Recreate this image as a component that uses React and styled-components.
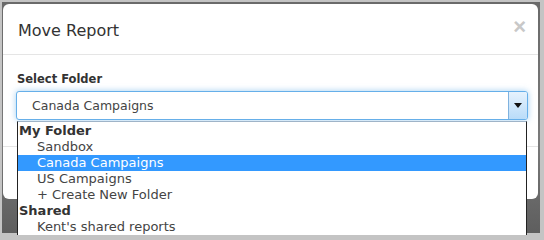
import React from "react";
import styled, { createGlobalStyle } from "styled-components";

const GlobalStyle = createGlobalStyle`
  html, body {
    margin: 0;
    padding: 0;
    background: #c4c4c4;
  }
  * {
    box-sizing: border-box;
  }
`;

const folders = [
  {
    group: "My Folder",
    items: ["Sandbox", "Canada Campaigns", "US Campaigns", "+ Create New Folder"],
  },
  {
    group: "Shared",
    items: ["Kent's shared reports"],
  },
];

const selected = "Canada Campaigns";

export default function App() {
  return (
    <>
      <GlobalStyle />
      <Frame>
        <Backdrop>
          <Modal>
            <Header>
              <Title>Move Report</Title>
              <Close>×</Close>
            </Header>
            <Body>
              <Label>Select Folder</Label>
              <SelectWrap>
                <SelectBox>
                  <SelectValue>{selected}</SelectValue>
                  <ArrowButton>
                    <svg width="8" height="5" viewBox="0 0 8 5">
                      <path d="M0 0h8L4 5z" fill="#111" />
                    </svg>
                  </ArrowButton>
                </SelectBox>
                <Menu>
                  {folders.map((f) => (
                    <React.Fragment key={f.group}>
                      <Group>{f.group}</Group>
                      {f.items.map((item) => (
                        <Option key={item} $active={item === selected}>
                          {item}
                        </Option>
                      ))}
                    </React.Fragment>
                  ))}
                </Menu>
              </SelectWrap>
            </Body>
            <Footer />
          </Modal>
        </Backdrop>
      </Frame>
    </>
  );
}

const Frame = styled.div`
  width: 544px;
  height: 238px;
  padding: 2px 4px 5px 2px;
  background: #c4c4c4;
  overflow: hidden;
  font-family: "DejaVu Sans", Verdana, sans-serif;
`;

const Backdrop = styled.div`
  height: 100%;
  padding: 2px 0 0 1px;
  background: linear-gradient(#6a6a6a, #7a7a7a 60%, #5e5e5e);
`;

const Modal = styled.div`
  width: 535px;
  height: 195px;
  background: #fff;
  border-radius: 6px;
  display: flex;
  flex-direction: column;
`;

const Header = styled.div`
  height: 51px;
  display: flex;
  align-items: center;
  justify-content: space-between;
  padding: 0 12px 0 15px;
  border-bottom: 1px solid #e5e5e5;
`;

const Title = styled.div`
  font-size: 16px;
  color: #333;
  padding-top: 2px;
`;

const Close = styled.div`
  font-family: "Liberation Sans", Arial, sans-serif;
  font-size: 22px;
  font-weight: 700;
  color: #c8c8c8;
  line-height: 1;
  padding-bottom: 4px;
`;

const Body = styled.div`
  padding: 17px 10px 0 13px;
`;

const Label = styled.div`
  font-size: 11.5px;
  font-weight: 700;
  color: #333;
  padding-left: 1px;
  margin-bottom: 5px;
`;

const SelectWrap = styled.div`
  position: relative;
`;

const SelectBox = styled.div`
  height: 29px;
  display: flex;
  border: 1px solid #66afe9;
  border-radius: 3px;
  box-shadow: 0 0 6px rgba(102, 175, 233, 0.6);
  background: #fff;
`;

const SelectValue = styled.div`
  flex: 1;
  display: flex;
  align-items: center;
  padding-left: 15px;
  font-size: 12.5px;
  color: #444;
`;

const ArrowButton = styled.div`
  width: 19px;
  display: flex;
  align-items: center;
  justify-content: center;
  border-left: 1px solid #7fb2df;
  background: linear-gradient(#e6f2fd, #b9dcf9);
  border-radius: 0 2px 2px 0;
`;

const Menu = styled.div`
  position: absolute;
  top: 30px;
  left: 1px;
  width: 510px;
  padding-top: 1px;
  background: #fff;
  border: 1px solid #222;
  border-top-color: #9fb4c8;
  border-bottom: none;
  z-index: 2;
`;

const Group = styled.div`
  height: 16px;
  line-height: 16px;
  padding-left: 1px;
  font-size: 13px;
  font-weight: 700;
  color: #333;
`;

const Option = styled.div`
  height: 16px;
  line-height: 16px;
  padding-left: 19px;
  font-size: 13px;
  color: ${({ $active }) => ($active ? "#fff" : "#444")};
  background: ${({ $active }) => ($active ? "#3399ff" : "transparent")};
`;

const Footer = styled.div`
  margin-top: 26px;
  border-top: 1px solid #e5e5e5;
`;
